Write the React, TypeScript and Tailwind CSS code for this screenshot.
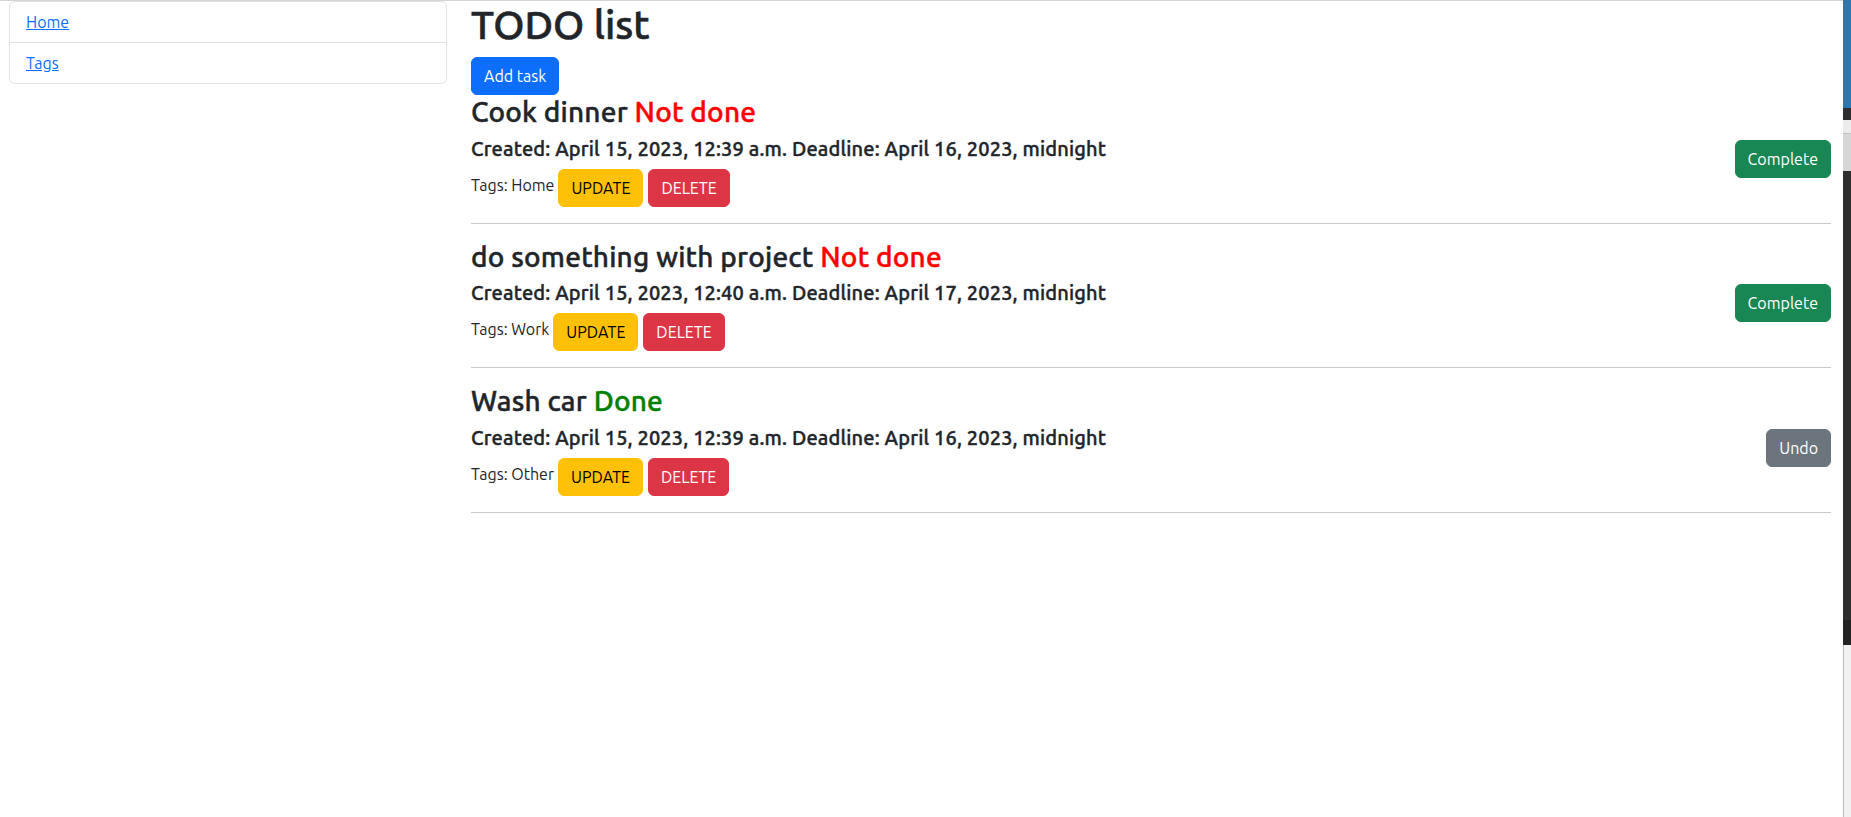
import React from "react";

type Task = {
  title: string;
  done: boolean;
  created: string;
  deadline: string;
  tag: string;
};

const tasks: Task[] = [
  {
    title: "Cook dinner",
    done: false,
    created: "April 15, 2023, 12:39 a.m.",
    deadline: "April 16, 2023, midnight",
    tag: "Home",
  },
  {
    title: "do something with project",
    done: false,
    created: "April 15, 2023, 12:40 a.m.",
    deadline: "April 17, 2023, midnight",
    tag: "Work",
  },
  {
    title: "Wash car",
    done: true,
    created: "April 15, 2023, 12:39 a.m.",
    deadline: "April 16, 2023, midnight",
    tag: "Other",
  },
];

function TaskItem({ task }: { task: Task }) {
  return (
    <div>
      <div className="flex items-center justify-between">
        <div className="pb-4">
          {/* no medium cut of the font here, so thicken a little */}
          <h3 className="mb-2 text-[28px] leading-[33.6px] font-medium tracking-[0.2px] [-webkit-text-stroke:0.45px]">
            {task.title}{" "}
            <span className={task.done ? "text-[#008000]" : "text-[#ff0000]"}>
              {task.done ? "Done" : "Not done"}
            </span>
          </h3>
          <h5 className="mb-2 text-[20px] leading-6 font-medium tracking-[0.16px] [-webkit-text-stroke:0.4px]">
            Created: {task.created} Deadline: {task.deadline}
          </h5>
          <div className="flex items-center gap-[4px]">
            <span className="pb-[6px] text-base leading-6">Tags: {task.tag}</span>
            <button className="rounded-[6px] border border-[#ffc107] bg-[#ffc107] px-3 py-[6px] text-base leading-6 text-black">
              UPDATE
            </button>
            <button className="ml-[1px] rounded-[6px] border border-[#dc3545] bg-[#dc3545] px-3 py-[6px] text-base leading-6 text-white">
              DELETE
            </button>
          </div>
        </div>
        {task.done ? (
          <button className="rounded-[6px] border border-[#6c757d] bg-[#6c757d] px-3 py-[6px] text-base leading-6 text-white">
            Undo
          </button>
        ) : (
          <button className="rounded-[6px] border border-[#198754] bg-[#198754] px-3 py-[6px] text-base leading-6 text-white">
            Complete
          </button>
        )}
      </div>
      <hr className="mb-4 border-t border-[#c8c9ca]" />
    </div>
  );
}

export default function App() {
  return (
    <div className="flex min-h-screen bg-white font-['Ubuntu','Roboto',sans-serif] text-[#212529]">
      <div className="flex flex-1 items-start gap-[24px] border-t border-[#d4d4d4] pl-[9px] pr-[12px]">
        {/* sidebar */}
        <aside className="w-[438px] shrink-0 rounded-[6px] border border-[#dee2e6]">
          <div className="border-b border-[#dee2e6] px-4 py-2 text-base leading-6">
            <a href="#" className="text-[#0d6efd] underline">
              Home
            </a>
          </div>
          <div className="px-4 py-2 text-base leading-6">
            <a href="#" className="text-[#0d6efd] underline">
              Tags
            </a>
          </div>
        </aside>

        {/* todo list */}
        <main className="min-w-0 flex-1">
          <h1 className="mb-2 text-[40px] leading-[48px] font-medium [-webkit-text-stroke:0.6px]">
            TODO list
          </h1>
          <button className="rounded-[6px] border border-[#0d6efd] bg-[#0d6efd] px-3 py-[6px] text-base leading-6 text-white">
            Add task
          </button>
          {tasks.map((t) => (
            <TaskItem key={t.title} task={t} />
          ))}
        </main>
      </div>

      {/* edge of the window behind */}
      <div className="flex w-[8px] shrink-0 flex-col">
        <div className="h-[108px] bg-[#2b78b3]" />
        <div className="h-[12px] bg-[#2d2d2d]" />
        <div className="h-[13px] bg-[#ececec]" />
        <div className="h-[38px] border-t border-[#c4c4c4] bg-[#d6d6d6]" />
        <div className="h-[449px] bg-[#2e2e2e]" />
        <div className="h-[25px] bg-[#232323]" />
        <div className="flex-1 border-l border-[#bdbdbd] bg-[#f0f0f0]" />
      </div>
    </div>
  );
}
